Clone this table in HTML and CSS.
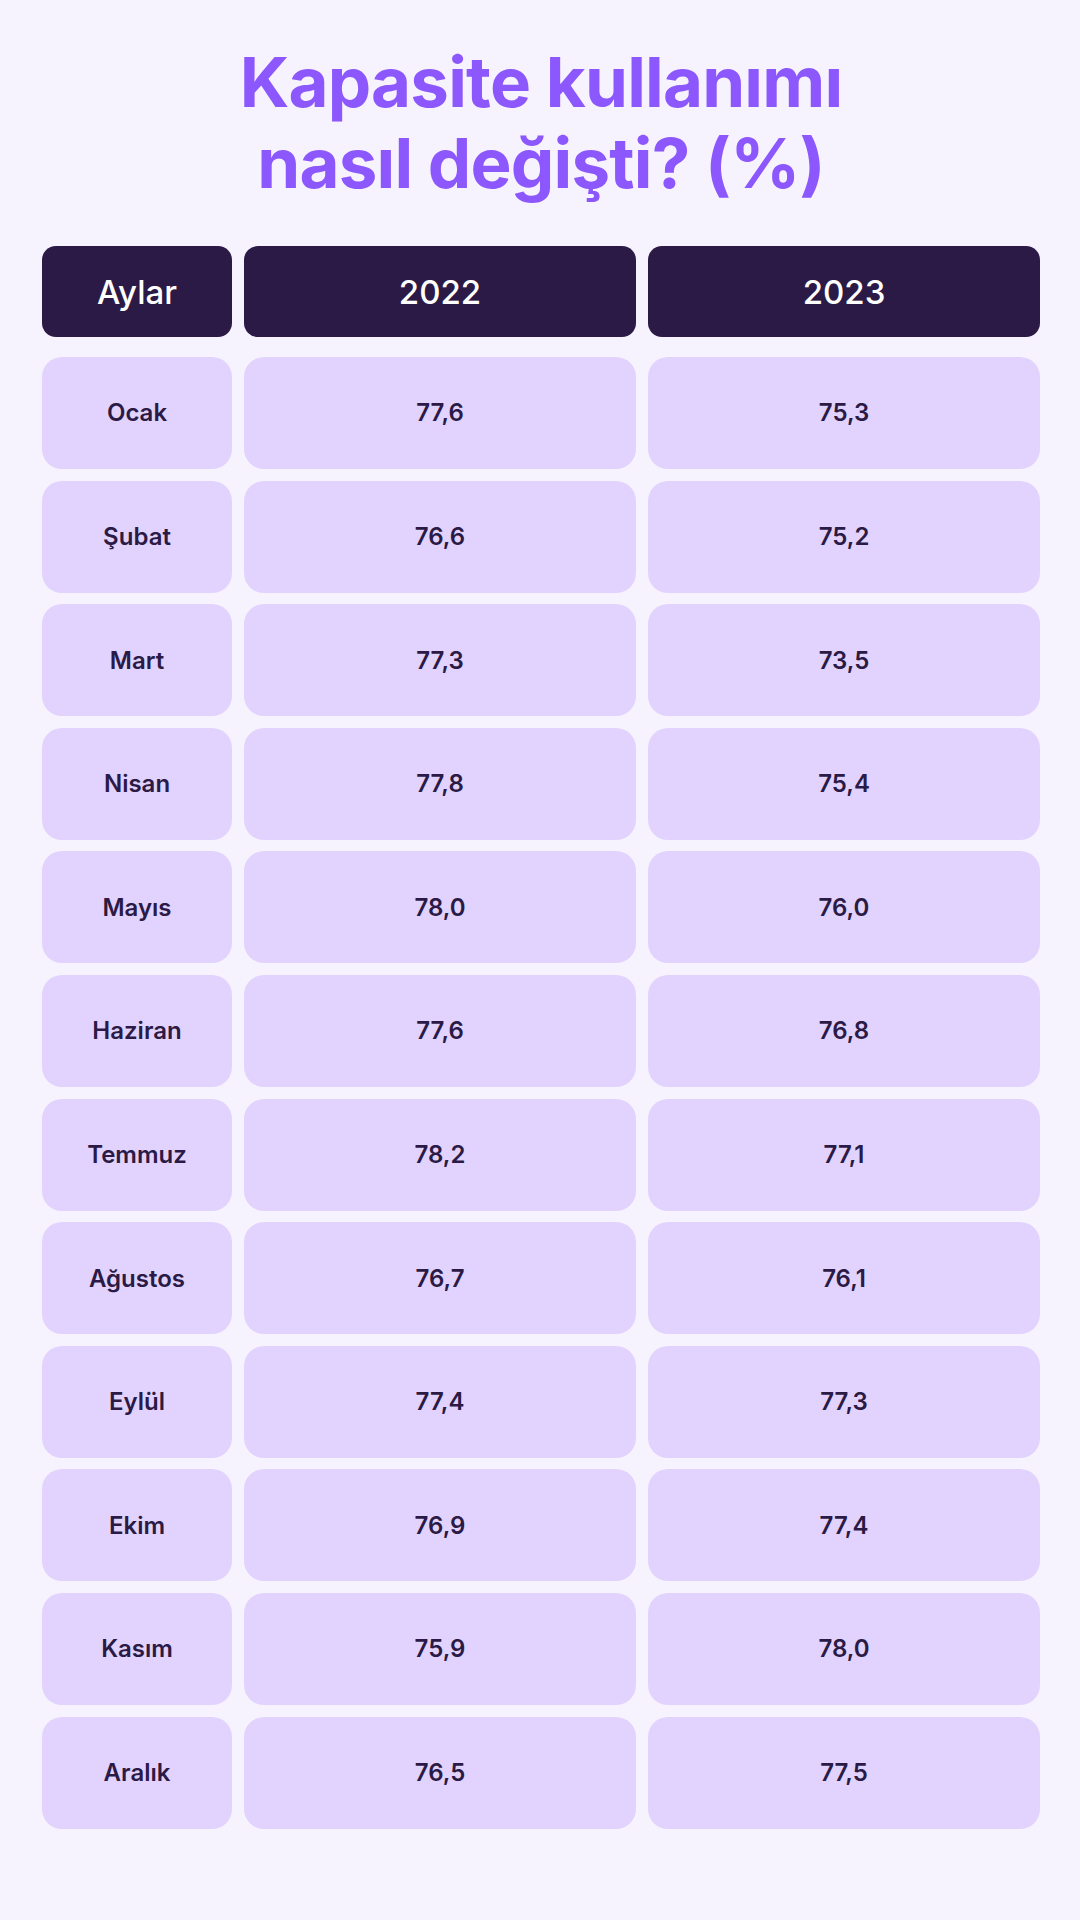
FILE: index.html
```html
<!DOCTYPE html>
<html lang="tr">
<head>
<meta charset="utf-8">
<title>Kapasite kullanımı</title>
<link rel="stylesheet" href="styles.css">
</head>
<body>
<main class="page">
  <h1 class="title">Kapasite kullanımı<br>nasıl değişti? (%)</h1>
  <div class="table">
    <div class="head">Aylar</div><div class="head">2022</div><div class="head">2023</div>
    <div class="cell">Ocak</div><div class="cell">77,6</div><div class="cell">75,3</div>
    <div class="cell">Şubat</div><div class="cell">76,6</div><div class="cell">75,2</div>
    <div class="cell">Mart</div><div class="cell">77,3</div><div class="cell">73,5</div>
    <div class="cell">Nisan</div><div class="cell">77,8</div><div class="cell">75,4</div>
    <div class="cell">Mayıs</div><div class="cell">78,0</div><div class="cell">76,0</div>
    <div class="cell">Haziran</div><div class="cell">77,6</div><div class="cell">76,8</div>
    <div class="cell">Temmuz</div><div class="cell">78,2</div><div class="cell">77,1</div>
    <div class="cell">Ağustos</div><div class="cell">76,7</div><div class="cell">76,1</div>
    <div class="cell">Eylül</div><div class="cell">77,4</div><div class="cell">77,3</div>
    <div class="cell">Ekim</div><div class="cell">76,9</div><div class="cell">77,4</div>
    <div class="cell">Kasım</div><div class="cell">75,9</div><div class="cell">78,0</div>
    <div class="cell">Aralık</div><div class="cell">76,5</div><div class="cell">77,5</div>
  </div>
</main>
</body>
</html>
```
FILE: styles.css
```css
html, body {
  margin: 0;
  padding: 0;
  background: #f6f3fe;
}
.page {
  width: 1080px;
  height: 1920px;
  box-sizing: border-box;
  padding: 42px 40px 0 42px;
  font-family: Inter, "Noto Sans", sans-serif;
}
.title {
  margin: 0 0 42px 0;
  text-align: center;
  color: #8c57fc;
  font-size: 69px;
  line-height: 81px;
  font-weight: 700;
  letter-spacing: -0.8px;
}
.table {
  display: grid;
  grid-template-columns: 190px 392px 392px;
  grid-template-rows: 99.4px;
  grid-auto-rows: 112px;
  column-gap: 12px;
  row-gap: 11.6px;
}
.head {
  background: #2a1a45;
  color: #ffffff;
  border-radius: 14px;
  display: flex;
  align-items: center;
  justify-content: center;
  font-size: 33px;
  font-weight: 500;
  margin-bottom: 8.4px;
}
.cell {
  background: #e2d3fe;
  color: #2a1a45;
  border-radius: 20px;
  display: flex;
  align-items: center;
  justify-content: center;
  font-size: 24px;
  font-weight: 600;
}
```
